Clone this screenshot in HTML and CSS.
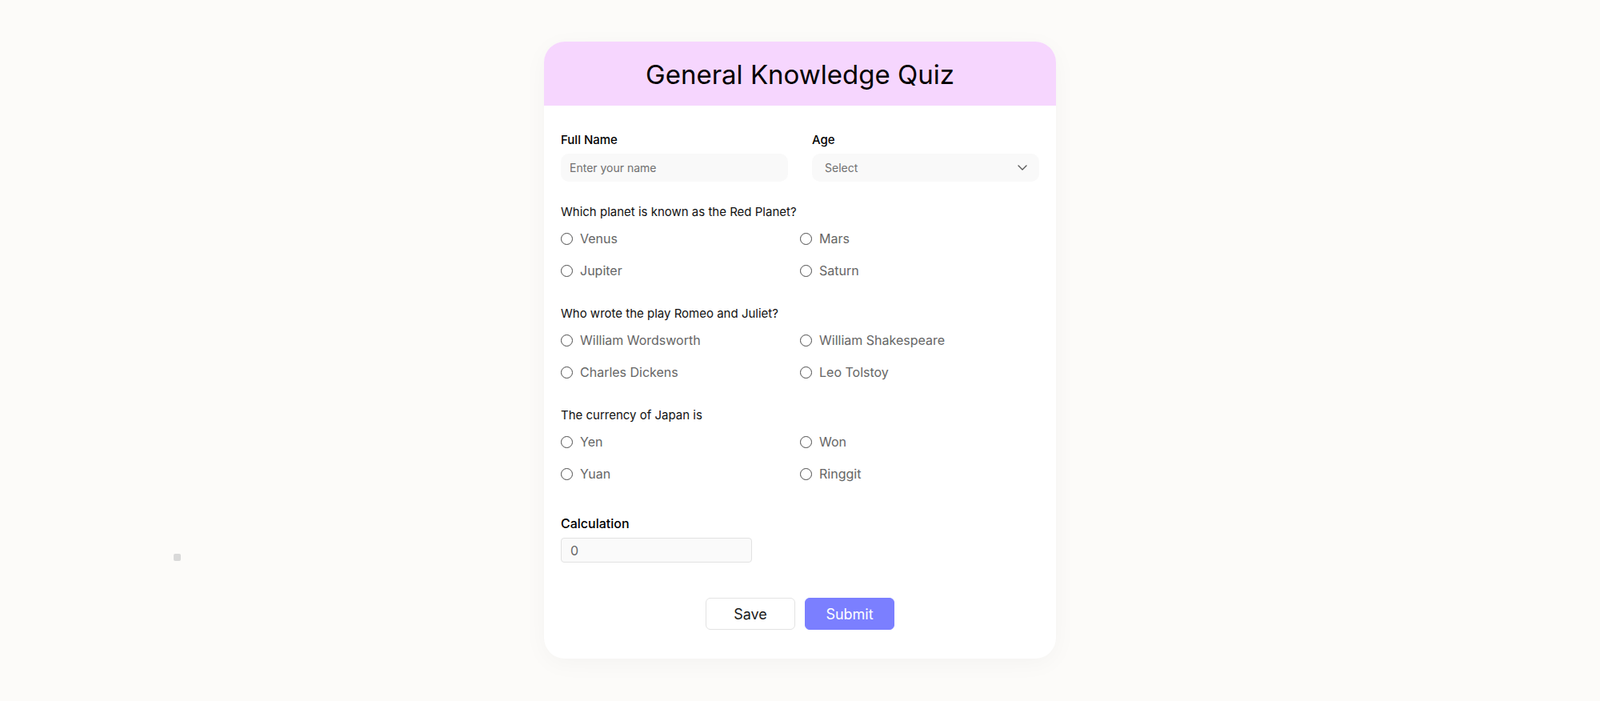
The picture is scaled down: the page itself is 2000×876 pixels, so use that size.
FILE: index.html
```html
<!DOCTYPE html>
<html lang="en">
<head>
<meta charset="utf-8">
<title>General Knowledge Quiz</title>
<link rel="stylesheet" href="styles.css">
</head>
<body>
<div class="dot"></div>
<main class="page">
  <form class="card">
    <header class="card-header">
      <h1>General Knowledge Quiz</h1>
    </header>
    <div class="card-body">
      <div class="top-row">
        <div class="field">
          <label class="field-label">Full Name</label>
          <input class="text-input" type="text" placeholder="Enter your name">
        </div>
        <div class="field">
          <label class="field-label">Age</label>
          <div class="select">
            <span class="select-text">Select</span>
            <svg class="chevron" width="12" height="7" viewBox="0 0 12 7"><path d="M1 1l5 5 5-5" fill="none" stroke="#555" stroke-width="1.3" stroke-linecap="round" stroke-linejoin="round"/></svg>
          </div>
        </div>
      </div>

      <section class="question">
        <p class="q-text">Which planet is known as the Red Planet?</p>
        <div class="options">
          <label class="option"><input type="radio" name="q1"><span>Venus</span></label>
          <label class="option"><input type="radio" name="q1"><span>Mars</span></label>
          <label class="option"><input type="radio" name="q1"><span>Jupiter</span></label>
          <label class="option"><input type="radio" name="q1"><span>Saturn</span></label>
        </div>
      </section>

      <section class="question">
        <p class="q-text">Who wrote the play Romeo and Juliet?</p>
        <div class="options">
          <label class="option"><input type="radio" name="q2"><span>William Wordsworth</span></label>
          <label class="option"><input type="radio" name="q2"><span>William Shakespeare</span></label>
          <label class="option"><input type="radio" name="q2"><span>Charles Dickens</span></label>
          <label class="option"><input type="radio" name="q2"><span>Leo Tolstoy</span></label>
        </div>
      </section>

      <section class="question">
        <p class="q-text">The currency of Japan is</p>
        <div class="options">
          <label class="option"><input type="radio" name="q3"><span>Yen</span></label>
          <label class="option"><input type="radio" name="q3"><span>Won</span></label>
          <label class="option"><input type="radio" name="q3"><span>Yuan</span></label>
          <label class="option"><input type="radio" name="q3"><span>Ringgit</span></label>
        </div>
      </section>

      <div class="calc">
        <label class="calc-label">Calculation</label>
        <input class="calc-input" type="text" value="0">
      </div>

      <div class="actions">
        <button type="button" class="btn btn-save">Save</button>
        <button type="button" class="btn btn-submit">Submit</button>
      </div>
    </div>
  </form>
</main>
</body>
</html>
```

FILE: styles.css
```css
* { box-sizing: border-box; }

html, body {
  margin: 0;
  padding: 0;
}

body {
  background: #fcfbf9;
  font-family: Inter, "Noto Sans", "Liberation Sans", sans-serif;
  color: #000;
  min-height: 876px;
  position: relative;
}

.dot {
  position: absolute;
  left: 217px;
  top: 692px;
  width: 9px;
  height: 9px;
  border-radius: 2px;
  background: #d9d9d9;
}

.page {
  display: flex;
  justify-content: center;
  padding-top: 52px;
}

.card {
  width: 640px;
  background: #fff;
  border-radius: 26px;
  overflow: hidden;
  box-shadow: 0 6px 30px rgba(0, 0, 0, 0.035);
}

.card-header {
  height: 80px;
  background: #f6d6fe;
  display: flex;
  align-items: center;
  justify-content: center;
}

.card-header h1 {
  margin: 0;
  font-size: 33px;
  font-weight: 400;
  line-height: 40px;
  padding-top: 2px;
  color: #000;
}

.card-body {
  padding: 32px 21px 36px;
}

.top-row {
  display: grid;
  grid-template-columns: 1fr 1fr;
  column-gap: 30px;
}

.field {
  display: flex;
  flex-direction: column;
}

.field-label {
  font-size: 15px;
  font-weight: 500;
  line-height: 20px;
  padding-top: 1px;
  margin-bottom: 7px;
}

.text-input {
  height: 35px;
  border: none;
  border-radius: 10px;
  background: #f9f9f9;
  padding: 0 11px;
  font-family: inherit;
  font-size: 14px;
  color: #333;
  outline: none;
}

.text-input::placeholder {
  color: #707070;
}

.select {
  height: 35px;
  border-radius: 10px;
  background: #f9f9f9;
  padding: 0 15px 0 16px;
  display: flex;
  align-items: center;
  justify-content: space-between;
}

.select-text {
  font-size: 14px;
  color: #707070;
}

.chevron {
  display: block;
}

.question {
  margin-top: 30px;
}

.top-row + .question {
  margin-top: 26px;
}

.q-text {
  margin: 0;
  font-size: 15px;
  line-height: 24px;
  color: #111;
}

.options {
  margin-top: 9px;
  display: grid;
  grid-template-columns: 1fr 1fr;
  row-gap: 16px;
}

.option {
  display: flex;
  align-items: center;
  font-size: 16px;
  line-height: 24px;
  color: #666;
}

.option input {
  appearance: none;
  -webkit-appearance: none;
  margin: 0 9px 0 0;
  width: 15px;
  height: 15px;
  border: 1.4px solid #4a4a4a;
  border-radius: 50%;
  background: #fff;
  flex: none;
}

.calc {
  margin-top: 38px;
  display: flex;
  flex-direction: column;
  align-items: flex-start;
}

.calc-label {
  font-size: 16px;
  font-weight: 500;
  line-height: 24px;
}

.calc-input {
  margin-top: 6px;
  width: 239px;
  height: 31px;
  border: 1px solid #e2e2e2;
  border-radius: 4px;
  background: #fafafa;
  padding: 0 11px;
  font-family: inherit;
  font-size: 16px;
  color: #666;
  outline: none;
}

.actions {
  margin-top: 44px;
  display: flex;
  justify-content: center;
  gap: 12px;
}

.btn {
  width: 112px;
  height: 40px;
  border-radius: 6px;
  font-family: inherit;
  font-size: 18px;
  font-weight: 400;
  cursor: pointer;
}

.btn-save {
  background: #fff;
  border: 1px solid #e3e3e3;
  color: #1a1a1a;
}

.btn-submit {
  background: #7b7fff;
  border: 1px solid #7b7fff;
  color: #fff;
}
```
